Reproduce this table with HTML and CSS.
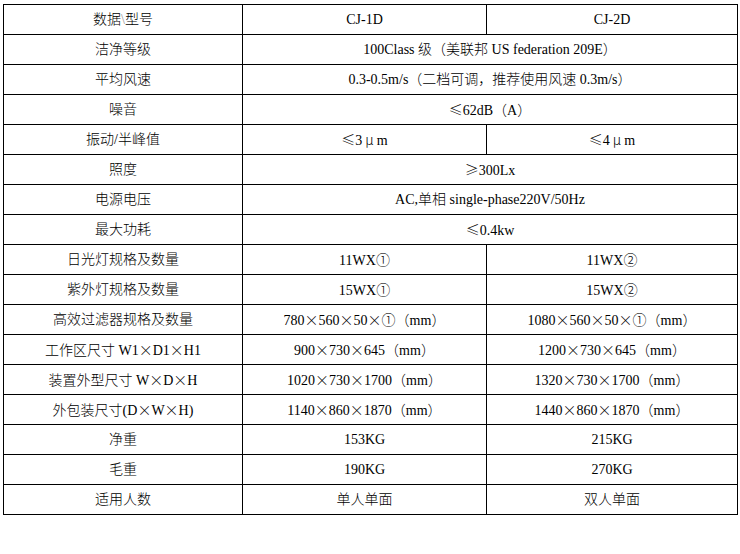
FILE: index.html
```html
<!DOCTYPE html>
<html lang="zh-CN">
<head>
<meta charset="utf-8">
<title>规格参数</title>
<link rel="stylesheet" href="styles.css">
</head>
<body>
<table class="spec">
  <colgroup>
    <col class="c1"><col class="c2"><col class="c3">
  </colgroup>
  <tbody>
    <tr><td>数据<span class="bs">\</span>型号</td><td>CJ-1D</td><td>CJ-2D</td></tr>
    <tr><td>洁净等级</td><td colspan="2">100Class 级（美联邦 US federation 209E）</td></tr>
    <tr><td>平均风速</td><td colspan="2">0.3-0.5m/s（二档可调，推荐使用风速 0.3m/s）</td></tr>
    <tr><td>噪音</td><td colspan="2"><span class="cj">≤</span>62dB（A）</td></tr>
    <tr><td>振动/半峰值</td><td><span class="cj">≤</span>3<span class="cj mu">μ</span>m</td><td><span class="cj">≤</span>4<span class="cj mu">μ</span>m</td></tr>
    <tr><td>照度</td><td colspan="2"><span class="cj">≥</span>300Lx</td></tr>
    <tr><td>电源电压</td><td colspan="2">AC,单相 single-phase220V/50Hz</td></tr>
    <tr><td>最大功耗</td><td colspan="2"><span class="cj">≤</span>0.4kw</td></tr>
    <tr><td>日光灯规格及数量</td><td>11WX<span class="cj">①</span></td><td>11WX<span class="cj">②</span></td></tr>
    <tr><td>紫外灯规格及数量</td><td>15WX<span class="cj">①</span></td><td>15WX<span class="cj">②</span></td></tr>
    <tr><td>高效过滤器规格及数量</td><td>780<span class="cj">×</span>560<span class="cj">×</span>50<span class="cj">×①</span>（mm）</td><td>1080<span class="cj">×</span>560<span class="cj">×</span>50<span class="cj">×①</span>（mm）</td></tr>
    <tr><td>工作区尺寸 W1<span class="cj">×</span>D1<span class="cj">×</span>H1</td><td>900<span class="cj">×</span>730<span class="cj">×</span>645（mm）</td><td>1200<span class="cj">×</span>730<span class="cj">×</span>645（mm）</td></tr>
    <tr><td>装置外型尺寸 W<span class="cj">×</span>D<span class="cj">×</span>H</td><td>1020<span class="cj">×</span>730<span class="cj">×</span>1700（mm）</td><td>1320<span class="cj">×</span>730<span class="cj">×</span>1700（mm）</td></tr>
    <tr><td>外包装尺寸(D<span class="cj">×</span>W<span class="cj">×</span>H)</td><td>1140<span class="cj">×</span>860<span class="cj">×</span>1870（mm）</td><td>1440<span class="cj">×</span>860<span class="cj">×</span>1870（mm）</td></tr>
    <tr><td>净重</td><td>153KG</td><td>215KG</td></tr>
    <tr><td>毛重</td><td>190KG</td><td>270KG</td></tr>
    <tr><td>适用人数</td><td>单人单面</td><td>双人单面</td></tr>
  </tbody>
</table>
</body>
</html>
```

FILE: styles.css
```css
html, body {
  margin: 0;
  padding: 0;
  background: #ffffff;
}
body {
  padding: 4px 0 0 3px;
  font-family: "Liberation Serif", "Noto Sans CJK SC", serif;
  font-size: 14px;
  font-weight: 300;
  color: #000000;
}
.spec {
  border-collapse: collapse;
  table-layout: fixed;
  width: 734px;
}
.c1 { width: 239px; }
.c2 { width: 244px; }
.c3 { width: 251px; }
.spec tr {
  height: 30px;
}
.spec td {
  border: 1px solid #000000;
  text-align: center;
  vertical-align: middle;
  padding: 0;
  line-height: 16px;
  white-space: nowrap;
}
.cj {
  font-family: "Noto Sans CJK SC", sans-serif;
  font-weight: 300;
}
.mu {
  margin: 0 3px;
}
.bs {
  color: #999999;
}
```
